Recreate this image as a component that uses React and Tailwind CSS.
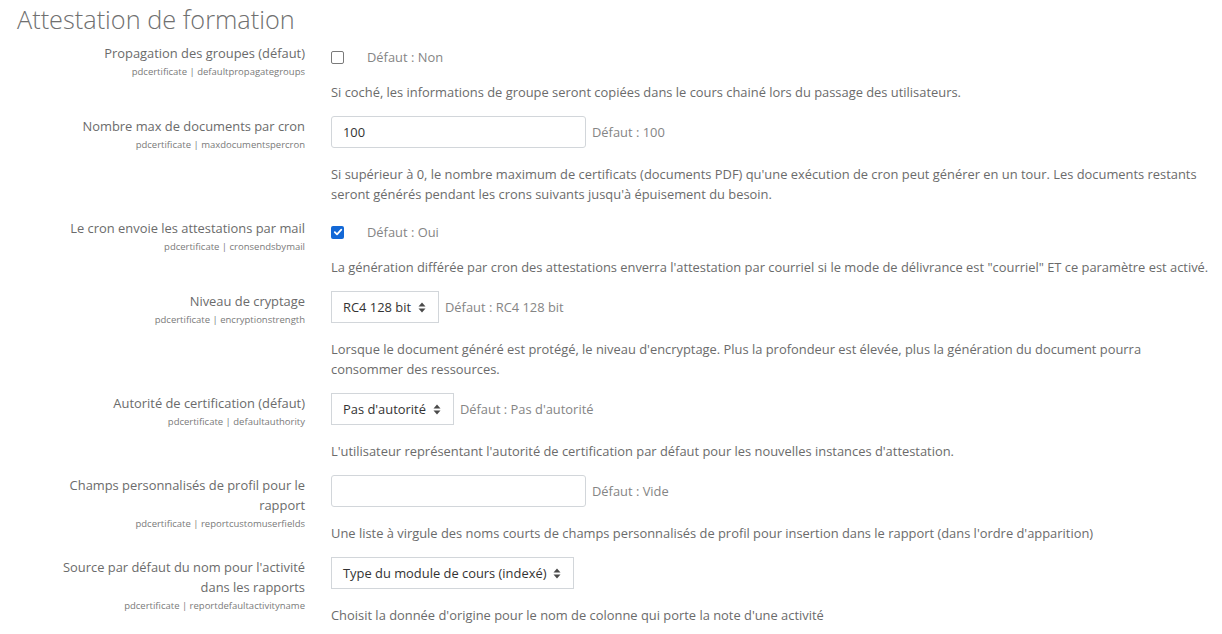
const settings = [
  {
    label: ['Propagation des groupes (défaut)'],
    name: 'pdcertificate | defaultpropagategroups',
    type: 'checkbox',
    checked: false,
    def: 'Défaut : Non',
    desc: 'Si coché, les informations de groupe seront copiées dans le cours chainé lors du passage des utilisateurs.',
  },
  {
    label: ['Nombre max de documents par cron'],
    name: 'pdcertificate | maxdocumentspercron',
    type: 'text',
    value: '100',
    def: 'Défaut : 100',
    desc: "Si supérieur à 0, le nombre maximum de certificats (documents PDF) qu'une exécution de cron peut générer en un tour. Les documents restants seront générés pendant les crons suivants jusqu'à épuisement du besoin.",
  },
  {
    label: ['Le cron envoie les attestations par mail'],
    name: 'pdcertificate | cronsendsbymail',
    type: 'checkbox',
    checked: true,
    def: 'Défaut : Oui',
    desc: 'La génération différée par cron des attestations enverra l\'attestation par courriel si le mode de délivrance est "courriel" ET ce paramètre est activé.',
  },
  {
    label: ['Niveau de cryptage'],
    name: 'pdcertificate | encryptionstrength',
    type: 'select',
    value: 'RC4 128 bit',
    def: 'Défaut : RC4 128 bit',
    desc: 'Lorsque le document généré est protégé, le niveau d\'encryptage. Plus la profondeur est élevée, plus la génération du document pourra consommer des ressources.',
  },
  {
    label: ['Autorité de certification (défaut)'],
    name: 'pdcertificate | defaultauthority',
    type: 'select',
    value: "Pas d'autorité",
    def: "Défaut : Pas d'autorité",
    desc: "L'utilisateur représentant l'autorité de certification par défaut pour les nouvelles instances d'attestation.",
  },
  {
    label: ['Champs personnalisés de profil pour le', 'rapport'],
    name: 'pdcertificate | reportcustomuserfields',
    type: 'text',
    value: '',
    def: 'Défaut : Vide',
    desc: "Une liste à virgule des noms courts de champs personnalisés de profil pour insertion dans le rapport (dans l'ordre d'apparition)",
  },
  {
    label: ["Source par défaut du nom pour l'activité", 'dans les rapports'],
    name: 'pdcertificate | reportdefaultactivityname',
    type: 'select',
    value: 'Type du module de cours (indexé)',
    def: null,
    desc: "Choisit la donnée d'origine pour le nom de colonne qui porte la note d'une activité",
  },
];

function SortArrows() {
  return (
    <svg width="8" height="11" viewBox="0 0 8 11" className="ml-[7px] shrink-0">
      <path d="M4 0.5 L7.5 4.5 H0.5 Z" fill="#4a4a4a" />
      <path d="M4 10.5 L7.5 6.5 H0.5 Z" fill="#4a4a4a" />
    </svg>
  );
}

function Control({ s }) {
  if (s.type === 'checkbox') {
    return (
      <div className="flex h-[28px] items-center mb-[11px]">
        {s.checked ? (
          <span className="flex h-[13px] w-[13px] items-center justify-center rounded-[2px] bg-[#1368d6]">
            <svg width="10" height="10" viewBox="0 0 10 10">
              <path d="M1.8 5.2 L4 7.4 L8.3 2.6" stroke="#fff" strokeWidth="1.8" fill="none" strokeLinecap="round" strokeLinejoin="round" />
            </svg>
          </span>
        ) : (
          <span className="h-[13px] w-[13px] rounded-[2px] border border-[#7a7a7a] bg-white" />
        )}
        <span className="ml-[23px] text-[#858585]">{s.def}</span>
      </div>
    );
  }
  if (s.type === 'text') {
    return (
      <div className="flex items-center mb-[16px]">
        <div className="flex h-[32px] w-[255px] items-center rounded-[3px] border border-[#d2d6da] bg-white px-[11px] text-[#333]">
          {s.value}
        </div>
        <span className="ml-[6px] text-[#858585]">{s.def}</span>
      </div>
    );
  }
  return (
    <div className="flex items-center mb-[16px]">
      <div className="flex h-[32px] items-center border border-[#d2d6da] bg-white pl-[11px] pr-[12px] text-[#333]">
        {s.value}
        <SortArrows />
      </div>
      {s.def && <span className="ml-[6px] text-[#858585]">{s.def}</span>}
    </div>
  );
}

export default function App() {
  return (
    <div className="min-h-screen bg-white font-['Open_Sans',sans-serif] text-[12.9px] leading-[20px] text-[#6b6b6b]">
      <h2 className="pl-[17px] pt-[1px] text-[25.3px] font-light leading-[36px] text-[#707070]">
        Attestation de formation
      </h2>
      <div className="mt-[6px]">
        {settings.map((s) => (
          <div key={s.name} className="flex mb-[14px]">
            <div className="w-[305px] shrink-0 text-right">
              {s.label.map((l) => (
                <div key={l}>{l}</div>
              ))}
              <div className="text-[9.5px] leading-[18px] text-[#7a7a7a]">{s.name}</div>
            </div>
            <div className="ml-[26px] w-[884px]">
              <Control s={s} />
              <p>{s.desc}</p>
            </div>
          </div>
        ))}
      </div>
    </div>
  );
}
